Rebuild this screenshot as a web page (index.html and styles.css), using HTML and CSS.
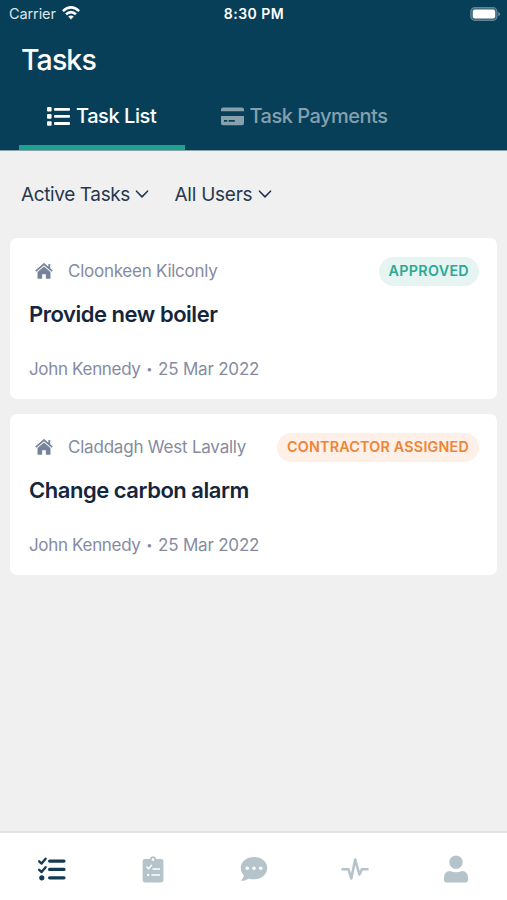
FILE: index.html
```html
<!DOCTYPE html>
<html lang="en">
<head>
<meta charset="utf-8">
<title>Tasks</title>
<link rel="stylesheet" href="styles.css">
</head>
<body>
<div class="app">
  <header class="header">
    <div class="status">
      <div class="status-left"><span class="carrier">Carrier</span>
        <svg class="wifi" width="18" height="14" viewBox="0 0 18 14" fill="none" stroke="#fff" stroke-width="2.5"><path d="M.9 5.1Q9-2.3 17.1 5.1M4 8.3Q9 3.9 14 8.3"/><path d="M6.2 10.6Q9 8.2 11.8 10.6L9 13.6Z" fill="#fff" stroke="none"/></svg>
      </div>
      <span class="time">8:30 PM</span>
      <svg class="battery" width="31" height="14" viewBox="0 0 31 14"><rect x=".8" y=".7" width="26.2" height="12.6" rx="4" fill="#3b6579" stroke="#648496" stroke-width="1.2"/><rect x="2.8" y="2.5" width="22.4" height="9" rx="2.2" fill="#fff"/><path d="M28.4 4.7q3.2 2.3 0 4.6z" fill="#7e9aaa"/></svg>
    </div>
    <h1 class="title">Tasks</h1>
    <nav class="tabs">
      <a class="tab tab-active">
        <svg width="23" height="19" viewBox="0 0 23 19" fill="#fff"><rect width="4.6" height="4.6" rx="1"/><rect y="7.1" width="4.6" height="4.6" rx="1"/><rect y="14.2" width="4.6" height="4.6" rx="1"/><rect x="7" y=".9" width="16" height="2.8" rx="1"/><rect x="7" y="8" width="16" height="2.8" rx="1"/><rect x="7" y="15.1" width="16" height="2.8" rx="1"/></svg>
        <span class="tab-list">Task List</span>
      </a>
      <a class="tab tab-pay">
        <svg width="23" height="19" viewBox="0 0 23 19"><path d="M0 4.3V2.5Q0 .5 2 .5H21q2 0 2 2v1.8zM0 9H23v7.3q0 2-2 2H2q-2 0-2-2z" fill="#86a0ae"/><path d="M3 13.9h3.2M7.6 13.9h6.2" stroke="#073f58" stroke-width="1.8"/></svg>
        <span class="tab-payments">Task Payments</span>
      </a>
    </nav>
  </header>
  <main class="content">
    <div class="filters">
      <div class="filter"><span class="f-active">Active Tasks</span><svg width="14" height="9" viewBox="0 0 14 9"><path d="M1.5 1.2 7 6.9l5.500-5.700" fill="none" stroke="#26384e" stroke-width="1.6" stroke-linecap="round" stroke-linejoin="round"/></svg></div>
      <div class="filter"><span class="f-users">All Users</span><svg width="14" height="9" viewBox="0 0 14 9"><path d="M1.5 1.2 7 6.9l5.500-5.700" fill="none" stroke="#26384e" stroke-width="1.6" stroke-linecap="round" stroke-linejoin="round"/></svg></div>
    </div>
    <article class="card">
      <div class="card-top">
        <svg class="home" width="18" height="16" viewBox="0 0 18 16"><path d="M.8 8.1 9 1.1l8.2 7M14.300 1v4.500" fill="none" stroke="#75849a" stroke-width="1.8"/><path d="M2.5 9 9 3.500 15.500 9v6.800h-4.600v-4.600H7.100v4.600H2.500z" fill="#75849a"/></svg>
        <span class="place p1">Cloonkeen Kilconly</span>
        <span class="badge approved">APPROVED</span>
      </div>
      <h2 class="card-title">Provide new boiler</h2>
      <p class="meta"><span class="person">John Kennedy</span><span class="dot">•</span><span class="date">25 Mar 2022</span></p>
    </article>
    <article class="card">
      <div class="card-top">
        <svg class="home" width="18" height="16" viewBox="0 0 18 16"><path d="M.8 8.1 9 1.1l8.2 7M14.300 1v4.500" fill="none" stroke="#75849a" stroke-width="1.8"/><path d="M2.5 9 9 3.500 15.500 9v6.800h-4.600v-4.600H7.100v4.600H2.500z" fill="#75849a"/></svg>
        <span class="place p2">Claddagh West Lavally</span>
        <span class="badge assigned">CONTRACTOR ASSIGNED</span>
      </div>
      <h2 class="card-title">Change carbon alarm</h2>
      <p class="meta"><span class="person">John Kennedy</span><span class="dot">•</span><span class="date">25 Mar 2022</span></p>
    </article>
  </main>
  <nav class="bottom">
    <a class="nav-item"><svg width="28" height="24" viewBox="0 0 28 24" fill="none" stroke="#143b55"><path d="M1.2 4.3 3.6 6.6 7.6 1.7M1.2 12.8l2.4 2.3 4-4.9" stroke-width="2.3" stroke-linecap="round" stroke-linejoin="round"/><path d="M11.6 4.1H26M11.6 12.4H26M11.6 20.8H26" stroke-width="3.2" stroke-linecap="round"/><circle cx="3.8" cy="20.8" r="2.6" fill="#143b55" stroke="none"/></svg></a>
    <a class="nav-item"><svg width="22" height="28" viewBox="0 0 22 28"><path d="M3 4h4.6a3.5 3.5 0 0 1 6.8 0H19q2.4 0 2.4 2.4v18.7q0 2.4-2.4 2.4H3Q.6 27.500.6 25.100V6.400Q.6 4 3 4z" fill="#b5c3cb"/><circle cx="11" cy="4.600" r="1.300" fill="#fff"/><path d="m5 12.200 1.500 1.500 3-3.300M11 14h6.500M10 20h7.500" fill="none" stroke="#fff" stroke-width="1.600" stroke-linecap="round"/><circle cx="6.200" cy="20" r="1.200" fill="#fff"/></svg></a>
    <a class="nav-item"><svg width="28" height="26" viewBox="0 0 28 26"><path d="M14 1C6.500 1 .800 5.800.800 12c0 2.800 1.100 5.200 3 7.200C3.500 21.500 2 23.400.800 24.700c3 .2 5.800-.8 7.800-2.300 1.700.6 3.500.9 5.400.9 7.500 0 13.200-5 13.200-11.300S21.500 1 14 1z" fill="#b5c3cb"/><g fill="#fff"><circle cx="7.300" cy="12.300" r="1.800"/><circle cx="14" cy="12.300" r="1.800"/><circle cx="20.700" cy="12.300" r="1.800"/></g></svg></a>
    <a class="nav-item"><svg width="28" height="24" viewBox="0 0 28 24"><path d="M1.500 12.200h6L10.300 21.500 14.200 2.500l4.200 15 2.500-5.300h5.600" fill="none" stroke="#b5c3cb" stroke-width="2.600" stroke-linecap="round" stroke-linejoin="round"/></svg></a>
    <a class="nav-item"><svg width="26" height="28" viewBox="0 0 26 28" fill="#b5c3cb"><circle cx="13" cy="7.300" r="6.700"/><path d="M7 16q6 2.600 12 0 6 .5 6 6.500v2.500q0 2.500-2.500 2.500h-19Q1 27.500 1 25v-2.500Q1 16.500 7 16z"/></svg></a>
  </nav>
</div>
</body>
</html>
```

FILE: styles.css
```css
* { box-sizing: border-box; }
body { margin: 0; font-family: Inter, "Liberation Sans", sans-serif; background: #f0f0f0; }
h1, h2, p { margin: 0; }
svg { display: block; flex: none; }
span { white-space: nowrap; }
.app { width: 507px; height: 900px; display: flex; flex-direction: column; overflow: hidden; }
.header { height: 151px; background: #073f58; border-bottom: 1px solid #8ba1ad; display: flex; flex-direction: column; color: #fff; flex: none; }
.status { height: 27px; padding: 0 6px 0 9px; display: grid; grid-template-columns: 1fr auto 1fr; align-items: center; }
.status-left { display: flex; align-items: center; gap: 6px; color: #dbe5ea; }
.wifi { margin-top: -1px; }
.carrier { font-size: 14.500px; letter-spacing: -0.1px; }
.time { font-size: 14px; font-weight: 600; letter-spacing: 0.5px; margin-right: 2px; }
.battery { justify-self: end; }
.title { height: 61px; line-height: 66px; padding-left: 21px; font-size: 28.500px; font-weight: 550; letter-spacing: -0.9px; }
.tabs { flex: 1; display: flex; padding-left: 19px; }
.tab { display: flex; align-items: center; gap: 6px; font-size: 20px; font-weight: 550; padding-bottom: 6px; }
.tab-active { width: 166px; padding-left: 28px; padding-bottom: 1px; border-bottom: 5px solid #1ea18e; }
.tab-list { letter-spacing: -0.43px; }
.tab-pay { margin-left: 35.500px; color: #86a0ae; }
.tab-payments { letter-spacing: -0.5px; }
.content { flex: 1; padding: 0 10px; }
.filters { height: 87px; display: flex; align-items: center; gap: 25px; padding-left: 11px; color: #26384e; font-size: 19px; }
.filter { display: flex; align-items: center; gap: 5.500px; }
.f-active { letter-spacing: -0.38px; }
.f-users { letter-spacing: -0.25px; }
.card { height: 161px; margin-bottom: 15px; padding: 18px 18px 0 19px; border-radius: 7px; background: #fff; }
.card-top { height: 30px; display: flex; align-items: center; }
.home { margin: 0 15px 0 6px; }
.place { color: #858b9f; font-size: 17px; }
.p1 { letter-spacing: -0.26px; }
.p2 { letter-spacing: -0.21px; }
.badge { margin-left: auto; height: 29px; border-radius: 15px; padding: 0 10px; line-height: 28px; font-size: 14.300px; font-weight: 570; letter-spacing: 0.22px; }
.approved { color: #2ba993; background: #e7f5f2; letter-spacing: 0.3px; }
.assigned { color: #ee8434; background: #fef0e6; }
.card-title { margin-top: 12px; line-height: 32px; font-size: 22px; font-weight: 600; letter-spacing: -0.47px; color: #14263d; }
.meta { margin-top: 27px; height: 24px; display: flex; align-items: center; font-size: 17px; color: #858b9f; }
.person { letter-spacing: -0.33px; }
.dot { width: 17.500px; text-align: center; font-size: 11px; }
.date { letter-spacing: -0.2px; }
.bottom { height: 69px; flex: none; background: #fff; border-top: 2px solid #e2e3e4; display: grid; grid-template-columns: repeat(5, 1fr); padding: 5px 0 0 1px; }
.nav-item { display: flex; align-items: center; justify-content: center; }
```
